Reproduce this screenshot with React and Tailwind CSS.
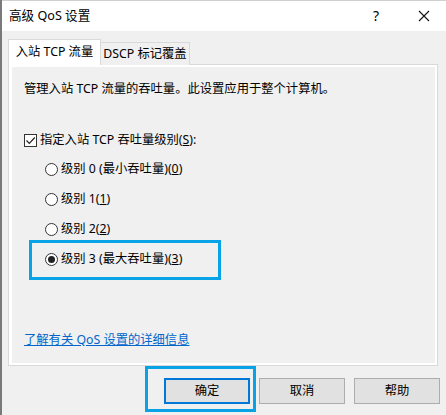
import React, { useState } from 'react';

const font = { fontFamily: '"Segoe UI", "Noto Sans", "Noto Sans CJK SC", sans-serif' };

const levels = [
  { id: 0, label: '级别 0 (最小吞吐量)(', key: '0' },
  { id: 1, label: '级别 1(', key: '1' },
  { id: 2, label: '级别 2(', key: '2' },
  { id: 3, label: '级别 3 (最大吞吐量)(', key: '3' },
];

const Radio = ({ checked }) => (
  <span className="w-[13px] h-[13px] rounded-full border border-[#333] bg-white flex items-center justify-center shrink-0">
    {checked && <span className="w-[7px] h-[7px] rounded-full bg-[#222]" />}
  </span>
);

const App = () => {
  const [level, setLevel] = useState(3);

  return (
    <div
      className="relative w-[446px] h-[415px] bg-[#f0f0f0] border-l-2 border-[#7a7a7a] text-[12.3px] text-black overflow-hidden whitespace-nowrap"
      style={font}
    >
      {/* Title bar */}
      <div className="h-[31px] bg-white border-t border-[#cfcfcf] flex items-center pl-[7px] leading-none">
        <span className="text-[12.6px]">高级 QoS 设置</span>
        <span className="ml-auto mr-[39px] text-[14px]">?</span>
        <svg width="12" height="12" viewBox="0 0 12 12" className="mr-[16px]">
          <path d="M1 1 L11 11 M11 1 L1 11" stroke="#111" strokeWidth="1.1" />
        </svg>
      </div>

      {/* Tabs */}
      <div className="flex items-end pl-[6px] mt-[8px] h-[26px] relative z-10">
        <div className="w-[93px] h-[26px] bg-white border border-b-0 border-[#d9d9d9] flex items-center justify-center leading-none">
          入站 TCP 流量
        </div>
        <div className="w-[89px] h-[23px] bg-[#f0f0f0] border border-l-0 border-b-0 border-[#d9d9d9] flex items-center justify-center leading-none">
          DSCP 标记覆盖
        </div>
      </div>

      {/* Panel */}
      <div className="ml-[6px] -mt-[1px] w-[430px] h-[302px] border border-[#d9d9d9]">
        <div className="h-full bg-[#f0f0f0] border-l-[3px] border-t-2 border-r-2 border-b-2 border-white pl-[12px] flex flex-col">
          <div className="mt-[14px] h-[16px] leading-[16px]">
            管理入站 TCP 流量的吞吐量。此设置应用于整个计算机。
          </div>

          <div className="mt-[35px] h-[16px] flex items-center gap-[3px] leading-[16px]">
            <span className="w-[13px] h-[13px] border border-[#333] bg-white flex items-center justify-center shrink-0">
              <svg width="11" height="11" viewBox="0 0 11 11">
                <path d="M1.5 5.5 L4.3 8.3 L9.8 2.5" fill="none" stroke="#222" strokeWidth="1.2" />
              </svg>
            </span>
            <span>
              指定入站 TCP 吞吐量级别(<span className="underline">S</span>):
            </span>
          </div>

          <div className="mt-[6px] ml-[21px] flex flex-col">
            {levels.map((l) => (
              <div
                key={l.id}
                onClick={() => setLevel(l.id)}
                className="h-[30px] flex items-center gap-[3px] leading-[16px] cursor-default"
              >
                <Radio checked={level === l.id} />
                <span>
                  {l.label}
                  <span className="underline">{l.key}</span>)
                </span>
              </div>
            ))}
          </div>

          <div className="mt-[58px] h-[16px] leading-[16px]">
            <span className="text-[#0066cc] underline">了解有关 QoS 设置的详细信息</span>
          </div>
        </div>
      </div>

      {/* Buttons */}
      <div className="mt-[12px] flex justify-end gap-[9px] pr-[6px] leading-none">
        <button className="w-[86px] h-[26px] bg-[#e1e1e1] border-2 border-[#0078d7] flex items-center justify-center">
          确定
        </button>
        <button className="w-[86px] h-[26px] bg-[#e1e1e1] border border-[#adadad] flex items-center justify-center">
          取消
        </button>
        <button className="w-[86px] h-[26px] bg-[#e1e1e1] border border-[#adadad] flex items-center justify-center">
          帮助
        </button>
      </div>

      {/* Highlight overlays */}
      <div className="absolute left-[27px] top-[240px] w-[192px] h-[40px] border-[3px] border-[#07a3e6] pointer-events-none" />
      <div className="absolute left-[143px] top-[366px] w-[111px] h-[46px] border-[3px] border-[#07a3e6] pointer-events-none" />
    </div>
  );
};

export default App;
